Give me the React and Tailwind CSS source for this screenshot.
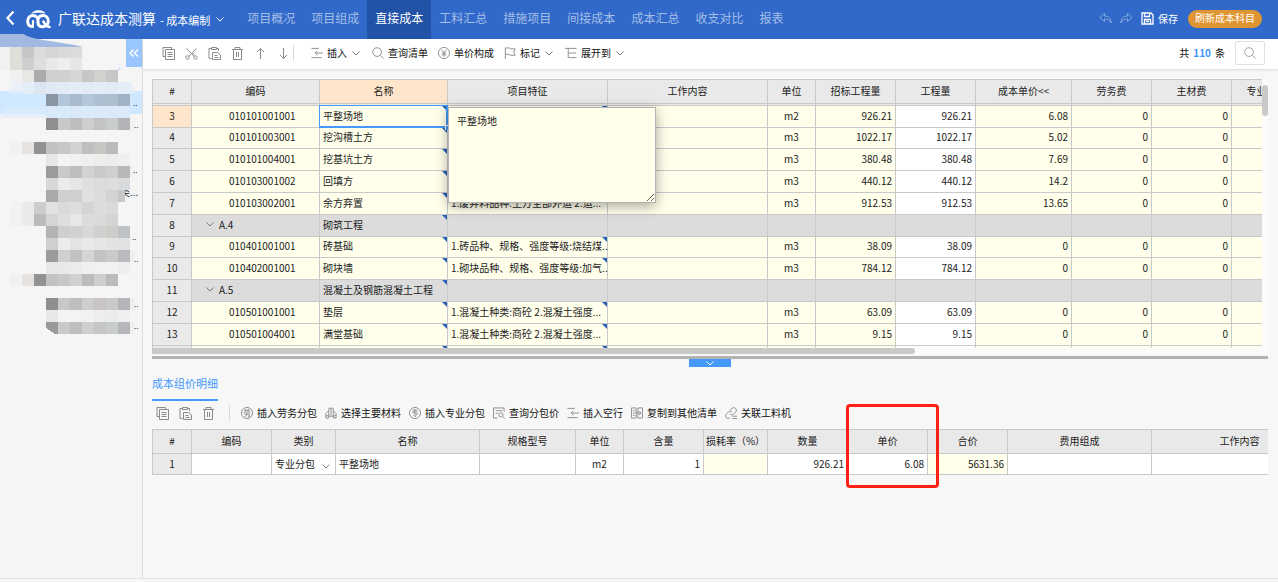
import { useState } from "react";

const navItems = ["项目概况", "项目组成", "直接成本", "工料汇总", "措施项目", "间接成本", "成本汇总", "收支对比", "报表"];

const costColumns = [
  { key: "no", label: "#", width: 40 },
  { key: "code", label: "编码", width: 128 },
  { key: "name", label: "名称", width: 128 },
  { key: "spec", label: "项目特征", width: 160 },
  { key: "work", label: "工作内容", width: 160 },
  { key: "unit", label: "单位", width: 48 },
  { key: "bidQty", label: "招标工程量", width: 80 },
  { key: "qty", label: "工程量", width: 80 },
  { key: "price", label: "成本单价<<", width: 96 },
  { key: "labor", label: "劳务费", width: 80 },
  { key: "material", label: "主材费", width: 80 },
  { key: "sub", label: "专业分包费", width: 80 },
];

const costRows = [
  { no: 3, code: "010101001001", name: "平整场地", spec: " ", unit: "m2", bidQty: "926.21", qty: "926.21", price: "6.08", labor: "0", material: "0" },
  { no: 4, code: "010101003001", name: "挖沟槽土方", spec: " ", unit: "m3", bidQty: "1022.17", qty: "1022.17", price: "5.02", labor: "0", material: "0" },
  { no: 5, code: "010101004001", name: "挖基坑土方", spec: " ", unit: "m3", bidQty: "380.48", qty: "380.48", price: "7.69", labor: "0", material: "0" },
  { no: 6, code: "010103001002", name: "回填方", spec: " ", unit: "m3", bidQty: "440.12", qty: "440.12", price: "14.2", labor: "0", material: "0" },
  { no: 7, code: "010103002001", name: "余方弃置", spec: "1.废弃料品种:土方全部外运 2.运...", unit: "m3", bidQty: "912.53", qty: "912.53", price: "13.65", labor: "0", material: "0" },
  { no: 8, code: "A.4", name: "砌筑工程", group: true },
  { no: 9, code: "010401001001", name: "砖基础", spec: "1.砖品种、规格、强度等级:烧结煤...", unit: "m3", bidQty: "38.09", qty: "38.09", price: "0", labor: "0", material: "0" },
  { no: 10, code: "010402001001", name: "砌块墙", spec: "1.砌块品种、规格、强度等级:加气...", unit: "m3", bidQty: "784.12", qty: "784.12", price: "0", labor: "0", material: "0" },
  { no: 11, code: "A.5", name: "混凝土及钢筋混凝土工程", group: true },
  { no: 12, code: "010501001001", name: "垫层", spec: "1.混凝土种类:商砼 2.混凝土强度...", unit: "m3", bidQty: "63.09", qty: "63.09", price: "0", labor: "0", material: "0" },
  { no: 13, code: "010501004001", name: "满堂基础", spec: "1.混凝土种类:商砼 2.混凝土强度...", unit: "m3", bidQty: "9.15", qty: "9.15", price: "0", labor: "0", material: "0" },
  { no: "", code: "", name: " ", spec: " " },
];

const detailColumns = [
  { label: "#", width: 40 },
  { label: "编码", width: 80 },
  { label: "类别", width: 64 },
  { label: "名称", width: 144 },
  { label: "规格型号", width: 96 },
  { label: "单位", width: 48 },
  { label: "含量", width: 80 },
  { label: "损耗率（%）", width: 64 },
  { label: "数量", width: 80 },
  { label: "单价", width: 80 },
  { label: "合价", width: 80 },
  { label: "费用组成", width: 144 },
  { label: "工作内容", width: 176 },
];

// 12px blocks, each row: y, first column index, colours
const blocks = [
  [46, 0, ["#f1f1f1", "#dfded9", "#c5c6c8", "#dcdcdb", "#d4d6d5", "#d9dad9", "#dadcdb"]],
  [58, 0, ["#f1f1f1", "#dfded9", "#cdced0", "#dededf", "#e8e8e8", "#eeeeee", "#e5e6e6"]],
  [70, 1, ["#f1f1f1", "#e9e7e4", "#a9abac", "#cfcfcf", "#cfd0cf", "#d6d7d5", "#c7c7c7", "#d3d1cc", "#c6c7c7"]],
  [82, 2, ["#e9eef7", "#d4dae4", "#dfe4ec", "#e2e8f1", "#e6ecf5", "#e2e7ef", "#e5eaf3", "#dfe5ee", "#e8eef8"]],
  [94, 4, ["#8895a2", "#b1c6d8", "#a9bacc", "#b2c8da", "#adbfd1", "#adbfce", "#a0b2c3"]],
  [106, 4, ["#d3e5f5", "#d5e8f8", "#d6e7f6", "#d6e8f7", "#d6e9f8", "#d7e9f8", "#d8e9f8"]],
  [118, 4, ["#908e8f", "#c6c9c8", "#bfbdc0", "#cecece", "#c4c2c4", "#c8cccb", "#b4b4b8", "#f1f1f1"]],
  [142, 1, ["#f1f1f1", "#e6e2df", "#919393", "#c0c3c2", "#c7c8c9", "#d2d2d3", "#bfbfbf", "#c8c6c3", "#babcbc"]],
  [154, 4, ["#e7e7e7", "#f2f4f3", "#f1f1f1", "#eef0ef", "#ededeb", "#ebedec", "#efefef"]],
  [166, 4, ["#9c9a9b", "#c8cac9", "#bfbdc0", "#d3d2d2", "#cbc8ca", "#cfcfcf", "#b7b7ba", "#f1f1f1"]],
  [178, 4, ["#dad7d9", "#ebebe9", "#e6e6e6", "#e0dfdf", "#dedcdb", "#dddddd", "#d8dadc"]],
  [190, 4, ["#a8aaa7", "#cfcfcf", "#d1cfd1", "#e0e0e1", "#dedcda", "#d1d3d4"]],
  [202, 1, ["#f2f2f2", "#eceae8", "#cacccd", "#e0e2e1", "#d9dad9", "#dcddde", "#d3d6d4", "#dcdcdb", "#d9dadb"]],
  [214, 1, ["#f1f1f1", "#eceae8", "#babbbc", "#d5d5d5", "#dededf", "#e7e7e7", "#dcdcda", "#dadad8", "#d3d4d4"]],
  [226, 4, ["#b4b2b3", "#cfcfcf", "#d2d0d2", "#d9d7d9", "#d0d0d0", "#cdcdca", "#bfc2c5"]],
  [238, 4, ["#cfcfcf", "#ebedec", "#e3e3e5", "#e9e9e9", "#e6e6e6", "#e2e3e3", "#e1e1e3"]],
  [250, 4, ["#9d9b9a", "#cfcfcf", "#c3c1c4", "#d5d3d5", "#c4c2c4", "#cacaca", "#b9babe", "#efefef"]],
  [262, 4, ["#e5e8e6", "#e9e9e9", "#ebebeb", "#f0f0f0", "#f1f1f0", "#f0f2f1", "#eeeeee"]],
  [274, 1, ["#f1f1f1", "#e6e2df", "#919393", "#c0c3c2", "#c6c8c9", "#d0d1d3", "#bcbdba", "#d0cdcd", "#babcbc"]],
  [298, 4, ["#908e8f", "#c6c9c8", "#bfbdc0", "#cecece", "#c8c4c6", "#c7cac9", "#b4b4b9", "#efefef"]],
  [310, 4, ["#e7e7e7", "#f2f4f3", "#f2f3f3", "#f0f1f0", "#ededeb", "#ebedec", "#efefef"]],
  [322, 4, ["#9a9898", "#c8cac9", "#bfbdc0", "#cfcfcf", "#c6c4c6", "#c8cccb", "#b6b7bb", "#efefef"]],
];

const moreMarks = [
  [133, 106], [134, 128], [133, 173], [132, 240], [134, 262], [134, 307], [134, 329],
];

function Icon({ children, className = "h-[13px] w-[13px]" }) {
  return (
    <svg viewBox="0 0 13 13" className={`shrink-0 ${className}`} fill="none" stroke="currentColor" aria-hidden="true">
      {children}
    </svg>
  );
}

const CopyIcon = () => (
  <Icon>
    <path d="M3 9.5H1V.5h8.500V2.500M3.500 2.500h9v10h-9zM5.500 5.500h5M5.500 7.500h5M5.500 9.500h5" />
  </Icon>
);

const CutIcon = () => (
  <Icon>
    <path d="M1.500 1.500 9.500 9.500M11.500 1.500 3.700 9.500M7.500 7h1.500" />
    <circle cx="2.500" cy="10.500" r="1.700" />
    <circle cx="10.500" cy="10.500" r="1.700" />
  </Icon>
);

const PasteIcon = () => (
  <Icon>
    <path d="M3.500 11.500H1v-10h2.500M8.500 1.500H10.500V4M3.500.500h5v2h-5zM4.500 5.500h5l3 2.500v4.500h-8zM6.500 8.500h3M6.500 10.500h4" />
  </Icon>
);

const TrashIcon = () => (
  <Icon>
    <path d="M1 2.500h11M4 2.500V.500h5v2M2.500 2.500v10h8v-10M5.500 5v5M7.500 5v5" />
  </Icon>
);

const UpIcon = () => (
  <Icon>
    <path d="M6.500 12V1.500M3 5l3.500-3.500L10 5" />
  </Icon>
);

const DownIcon = () => (
  <Icon>
    <path d="M6.500 1v10.500M3 8l3.500 3.500L10 8" />
  </Icon>
);

const InsertIcon = () => (
  <Icon className="h-3 w-3">
    <path d="M.500 1.500h8M5 6.500h8M.500 11.500h11M7 4 4.500 6.500 7 9" />
  </Icon>
);

const SearchIcon = () => (
  <Icon className="h-3 w-3">
    <circle cx="5.500" cy="5.500" r="4.700" />
    <path d="m9 9 3.500 3.500" />
  </Icon>
);

const YuanIcon = () => (
  <Icon className="h-3 w-3">
    <circle cx="6.500" cy="6.500" r="6" />
    <path d="M4 3l2.500 3L9 3M6.500 6v4.500M4 6.500h5M4 8.500h5" />
  </Icon>
);

const FlagIcon = () => (
  <Icon className="h-3 w-3">
    <path d="M1.500 13V1h4l1.500 1h5l-1.500 3.500L12 9H7L5.500 8h-4" />
  </Icon>
);

const ExpandIcon = () => (
  <Icon className="h-3 w-3">
    <path d="M0 1.500h12.500M3.500 1.500v10M3.500 6.500h8.500M3.500 11.500h9" />
  </Icon>
);

const LaborIcon = () => (
  <Icon className="h-3 w-3">
    <circle cx="6.500" cy="6.500" r="6" />
    <path d="M3.500 3.500h6M5 2.500v2M8 2.500v2M3.500 7V5.500h6V7M4 8h5v2.500H7.500M6.500 6.500C6.500 9 5.500 10 4 10.500" />
  </Icon>
);

const MaterialIcon = () => (
  <Icon className="h-3 w-3">
    <path d="M4 10V2.500C4 .500 6.500.500 6.500 2.500V9.500M6.500 2.500C6.500.500 9 .500 9 2.500V10M4 4 1 7v5h3v-2h5v2h3V7L9 4M1 9.500h3M9 9.500h3" />
  </Icon>
);

const MajorIcon = () => (
  <Icon className="h-3 w-3">
    <circle cx="6.500" cy="6.500" r="6" />
    <path d="M4 3.500h5M3.500 5.500h6M6.500 2.500 5.500 7.500H9L7 9.500M5 9l2.500 1.500" />
  </Icon>
);

const QueryPriceIcon = () => (
  <Icon className="h-3 w-3">
    <path d="M5 12H.500V1h11.500v4M3 4h7M3 7h2M10.500 10.500l2 2" />
    <circle cx="8.500" cy="8.500" r="2.300" />
  </Icon>
);

const CopyToIcon = () => (
  <Icon className="h-3 w-3">
    <path d="M.500 1h5v11h-5zM7.500 1h5v11h-5zM2 4h2M2 6.500h2M2 9h2M5.500 6.500H11M9 4.500l2 2-2 2" />
  </Icon>
);

const LinkIcon = () => (
  <Icon className="h-3 w-3">
    <path d="M5.500 3.500 7.500 1.500a2.600 2.600 0 0 1 4 4l-2 2a2.600 2.600 0 0 1-4 0M7.500 5.500a2.600 2.600 0 0 0-4 0L1.500 7.500a2.600 2.600 0 0 0 4 4M8 10h5M8 12.500h5" />
  </Icon>
);

function Chevron({ className = "" }) {
  return (
    <svg viewBox="0 0 8 5" className={`h-[5px] w-2 shrink-0 ${className}`} fill="none" stroke="currentColor" aria-hidden="true">
      <path d="M.5.5 4 4 7.500.5" />
    </svg>
  );
}

function ToolButton({ icon, children, menu }) {
  return (
    <button type="button" className="flex items-center gap-1 whitespace-nowrap">
      <span className="text-[#8a8a8a]">{icon}</span>
      <span className="text-[#111]">{children}</span>
      {menu && <Chevron className="ml-px mr-0.5 text-[#777]" />}
    </button>
  );
}

function IconButton({ label, children }) {
  return (
    <button type="button" aria-label={label} className="text-[#8a8a8a]">
      {children}
    </button>
  );
}

function Header() {
  const [active, setActive] = useState("直接成本");

  return (
    <header className="flex h-[39px] shrink-0 items-center bg-[#3069c9] text-white">
      <button type="button" aria-label="返回" className="pb-1 pl-1.5">
        <svg viewBox="0 0 9 16" className="h-4 w-[9px]" fill="none" stroke="currentColor" strokeWidth="2.200">
          <path d="M7.500 1.500 1.500 8l6 6.500" />
        </svg>
      </button>
      <svg viewBox="0 0 25 19" className="ml-[11px] h-[19px] w-[25px] shrink-0" fill="none" stroke="white" strokeLinecap="round" aria-hidden="true">
        <path d="M6 3.200C9.500-.600 15.500-.600 19 3.200c-4-1-9-1-13 0Z" fill="white" strokeWidth=".500" />
        <path d="M6.500 16.500C3.500 16.800 1.700 14.500 1.700 11.300c0-3.600 2.400-5.800 5.200-5.800 3 0 5.100 2 5.100 5.200v1.500c0 3 2 4.500 4.700 4.500 3.100 0 5.600-2.300 5.600-5.600s-2.300-5.600-5.200-5.600c-2.400 0-4.300 1.300-5 3.400" strokeWidth="3" />
        <path d="M7 11v3.500c0 1.400-.3 2-1 2" strokeWidth="2.200" />
        <path d="M17.500 11.500c1 2.500 3 4.800 6 5.500" strokeWidth="2.600" />
      </svg>
      <h1 className="ml-[7px] whitespace-nowrap pb-1 text-sm leading-5">广联达成本测算</h1>
      <button type="button" className="ml-1 flex items-center whitespace-nowrap text-[11px] leading-4">
        <span>- 成本编制</span>
        <Chevron className="ml-1.5" />
      </button>
      <nav className="ml-[15px] flex self-stretch">
        {navItems.map((item) => (
          <a
            key={item}
            href="#"
            onClick={() => setActive(item)}
            className={`flex items-center whitespace-nowrap px-2 pb-1 text-xs ${active === item ? "bg-[#2253a7] text-white" : "text-[#a6bfe8]"}`}
          >
            {item}
          </a>
        ))}
      </nav>
      <div className="ml-auto flex items-center pb-0.5 pr-4">
        <button type="button" aria-label="撤销" className="text-[#86a9e2]">
          <Icon>
            <path d="M5.500 1.500.800 5.500l4.700 4V7c3 0 5 1 6.700 4 0-4-2.200-7-6.700-7z" />
          </Icon>
        </button>
        <button type="button" aria-label="重做" className="ml-2 text-[#86a9e2]">
          <Icon>
            <path d="M7.500 1.500l4.700 4-4.700 4V7c-3 0-5 1-6.700 4 0-4 2.200-7 6.700-7z" />
          </Icon>
        </button>
        <button type="button" className="ml-2 flex items-center gap-1 text-[10px] leading-[14px]">
          <Icon>
            <path d="M1 1h9l2 2v9H1zM3.500 1v3.500h5V1M3.500 12V7.500h6V12M5 9.500h3" strokeWidth="1.300" />
          </Icon>
          <span>保存</span>
        </button>
        <button type="button" className="ml-2.5 h-[18px] whitespace-nowrap rounded-full bg-[#df9531] px-[7px] pb-0.5 text-[10px] leading-[14px]">
          刷新成本科目
        </button>
      </div>
    </header>
  );
}

function Sidebar() {
  return (
    <aside className="relative w-[143px] shrink-0 border-r border-[#dedede] bg-[#f5f5f5]">
      <svg viewBox="0 34 142 306" className="absolute -top-[5px] left-0 h-[306px] w-[142px]" shapeRendering="crispEdges">
        <rect x="0" y="91" width="142" height="23" fill="#cee8ff" />
        <text x="120" y="196" fontSize="10" fill="#222">类...</text>
        <rect x="118" y="190" width="7" height="12" fill="#c7c8ca" />
        {blocks.map(([y, start, colors]) =>
          colors.map((color, i) => {
            const x = (start + i) * 12 - 2;
            const width = start + i === 11 ? 5 : 12;
            return <rect key={`${x}-${y}`} x={x} y={y} width={width} height="12" fill={color} />;
          })
        )}
        <path d="M15 82h117l3 12H7z" fill="#e3edfa" opacity=".6" />
        <path d="M3 106h127l-2 12H1z" fill="#dcebf9" opacity=".6" />
        <path d="M46 322v6l9 6h-9z" fill="#f5f5f5" />
        <path d="M0 34h23c10 6 30 7 52 11l7 2H0z" fill="#a3b9e1" shapeRendering="auto" />
        <path d="M118 67l4 3h-4z" fill="#cfe1fa" shapeRendering="auto" />
        {moreMarks.map(([x, y]) => (
          <text key={y} x={x} y={y} fontSize="8" fill="#222">..</text>
        ))}
      </svg>
      <button type="button" aria-label="收起" className="absolute right-0 top-0 flex h-7 w-4 items-center justify-center bg-[#99c6ff] text-white">
        <svg viewBox="0 0 10 8" className="h-2 w-2.5" fill="none" stroke="currentColor" strokeWidth="1.500">
          <path d="M4.500.500 1 4l3.500 3.500M9 .500 5.500 4 9 7.500" />
        </svg>
      </button>
    </aside>
  );
}

function Toolbar() {
  return (
    <div className="z-10 flex h-[30px] shrink-0 items-center bg-white pb-0.5 pl-[19px] pr-[13px] shadow-[0_1px_2px_rgba(0,0,0,0.12)]">
      <div className="flex items-center gap-2.5">
        <IconButton label="复制"><CopyIcon /></IconButton>
        <IconButton label="剪切"><CutIcon /></IconButton>
        <IconButton label="粘贴"><PasteIcon /></IconButton>
        <IconButton label="删除"><TrashIcon /></IconButton>
        <IconButton label="上移"><UpIcon /></IconButton>
        <IconButton label="下移"><DownIcon /></IconButton>
      </div>
      <div className="ml-[3px] h-4 w-px bg-[#d9d9e2]" />
      <div className="ml-[17px] flex items-center gap-2.5">
        <ToolButton icon={<InsertIcon />} menu>插入</ToolButton>
        <ToolButton icon={<SearchIcon />}>查询清单</ToolButton>
        <ToolButton icon={<YuanIcon />}>单价构成</ToolButton>
        <ToolButton icon={<FlagIcon />} menu>标记</ToolButton>
        <ToolButton icon={<ExpandIcon />} menu>展开到</ToolButton>
      </div>
      <p className="ml-auto flex gap-1 whitespace-nowrap text-[#111]">
        共 <b className="text-[#3c94ff]">110</b> 条
      </p>
      <button type="button" aria-label="搜索" className="ml-2.5 flex h-6 w-[30px] items-center justify-center rounded-xs border border-[#e2e2e2] text-[#999]">
        <SearchIcon />
      </button>
    </div>
  );
}

function Columns({ columns }) {
  return (
    <colgroup>
      {columns.map((col) => (
        <col key={col.label} style={{ width: col.width }} />
      ))}
    </colgroup>
  );
}

function Corner() {
  return (
    <svg viewBox="0 0 5 5" className="absolute right-0 top-0 h-[5px] w-[5px]" aria-hidden="true">
      <path d="M0 0h5v5z" fill="#2a62b8" />
    </svg>
  );
}

function cellStyle(key, row) {
  if (key === "no") return row.no === 3 ? "bg-[#ffe6ca] text-center border-l" : "bg-[#e9e9e9] text-center border-l";
  const bg = row.group ? "bg-[#dcdcdc]" : key === "qty" ? "bg-white" : "bg-[#ffffeb]";
  if (key === "code") return `${bg} ${row.group ? "pl-3.5" : "pl-[37px]"}`;
  if (key === "unit") return `${bg} text-center`;
  if (key === "name" || key === "spec" || key === "work") return `${bg} px-[3px]`;
  return `${bg} px-[3px] text-right`;
}

function CostTable() {
  return (
    <table className="w-[1160px] table-fixed border-separate border-spacing-0">
      <Columns columns={costColumns} />
      <thead>
        <tr className="h-[25px]">
          {costColumns.map((col) => (
            <th
              key={col.key}
              className={`border-y border-r border-[#c9c9c9] px-0 pt-0 pb-0.5 font-normal first:border-l ${col.key === "name" ? "bg-[#ffe6ca]" : "bg-[#e9e9e9]"}`}
            >
              {col.label}
            </th>
          ))}
        </tr>
      </thead>
      <tbody>
        <tr className="h-0.5">
          {costColumns.map((col) => (
            <td key={col.key} className="h-0.5 border-b border-r border-[#c9c9c9] bg-[#e9e9e9] p-0 first:border-l" />
          ))}
        </tr>
        {costRows.map((row, i) => (
          <tr key={i} className={i % 5 === 1 ? "h-[21px]" : "h-[22px]"}>
            {costColumns.map(({ key }) => (
              <td key={key} className={`relative whitespace-nowrap border-b border-r border-[#c9c9c9] pt-0 pb-0.5 ${cellStyle(key, row)}`}>
                {key === "code" && row.group ? (
                  <span className="flex items-center gap-[5px]">
                    <Chevron className="text-[#777]" />
                    {row.code}
                  </span>
                ) : (
                  row[key]
                )}
                {(key === "name" || key === "spec") && row[key] && <Corner />}
                {key === "name" && row.no === 3 && (
                  <span className="absolute -inset-px z-10 border border-b-2 border-r-2 border-[#4499fb]">
                    <span className="absolute -bottom-1 -right-1 h-[5px] w-[5px] border-l border-t border-white bg-[#4499fb]" />
                  </span>
                )}
              </td>
            ))}
          </tr>
        ))}
      </tbody>
    </table>
  );
}

function CostPanel() {
  const [note, setNote] = useState("平整场地");

  return (
    <section className="flex min-h-0 flex-1 flex-col pl-[9px] pr-2.5 pt-2.5">
      <div className="relative flex min-h-0 flex-1">
        <div className="min-w-0 flex-1 overflow-hidden">
          <CostTable />
        </div>
        <div className="w-1.5 shrink-0 bg-[#fbfbfb] pt-1.5">
          <div className="h-[31px] rounded-full bg-[#c9c9c9]" />
        </div>
        <textarea
          aria-label="名称"
          value={note}
          onChange={(e) => setNote(e.target.value)}
          className="absolute left-[296px] top-7 z-20 h-24 w-52 resize border border-[#b4b4b4] bg-[#ffffeb] px-2 py-1.5 shadow-[0_3px_12px_rgba(0,0,0,0.35)] outline-none"
        />
      </div>
      <div className="h-1.5 shrink-0 bg-[#fbfbfb]">
        <div className="h-1.5 w-[763px] rounded-r-full bg-[#c9c9c9]" />
      </div>
      <div className="mt-0.5 h-[3px] shrink-0 bg-[#b3b3b3]" />
    </section>
  );
}

function DetailPanel() {
  return (
    <section className="h-[219px] shrink-0 pl-[9px] pr-2.5">
      <button type="button" aria-label="折叠" className="mx-auto flex h-2 w-[42px] items-center justify-center bg-[#4499fb] text-white">
        <Chevron />
      </button>
      <div className="mt-2 flex">
        <h2 className="border-b-2 border-[#4499fb] pb-2 text-[11px] leading-4 text-[#4499fb]">成本组价明细</h2>
      </div>
      <div className="flex h-7 items-center pb-1 pl-1">
        <div className="flex items-center gap-2.5">
          <IconButton label="复制"><CopyIcon /></IconButton>
          <IconButton label="粘贴"><PasteIcon /></IconButton>
          <IconButton label="删除"><TrashIcon /></IconButton>
        </div>
        <div className="ml-3.5 h-4 w-px bg-[#d9d9e2]" />
        <div className="ml-[11px] flex items-center gap-2">
          <ToolButton icon={<LaborIcon />}>插入劳务分包</ToolButton>
          <ToolButton icon={<MaterialIcon />}>选择主要材料</ToolButton>
          <ToolButton icon={<MajorIcon />}>插入专业分包</ToolButton>
          <ToolButton icon={<QueryPriceIcon />}>查询分包价</ToolButton>
          <ToolButton icon={<InsertIcon />}>插入空行</ToolButton>
          <ToolButton icon={<CopyToIcon />}>复制到其他清单</ToolButton>
          <ToolButton icon={<LinkIcon />}>关联工料机</ToolButton>
        </div>
      </div>
      <div className="relative">
        <div className="overflow-hidden">
          <table className="w-[1176px] table-fixed border-separate border-spacing-0">
            <Columns columns={detailColumns} />
            <thead>
              <tr className="h-[25px]">
                {detailColumns.map((col) => (
                  <th key={col.label} className="whitespace-nowrap border-y border-r border-[#c9c9c9] bg-[#e9e9e9] px-0 pt-0 pb-0.5 font-normal first:border-l">
                    {col.label}
                  </th>
                ))}
              </tr>
            </thead>
            <tbody className="[&_td]:border-b [&_td]:border-r [&_td]:border-[#c9c9c9] [&_td]:px-[3px] [&_td]:py-0">
              <tr className="h-[21px] bg-white">
                <td className="border-l bg-[#e9e9e9] text-center">1</td>
                <td />
                <td>
                  <div className="relative flex items-center">
                    <select aria-label="类别" className="w-full appearance-none bg-transparent leading-[14px]">
                      <option>专业分包</option>
                    </select>
                    <Chevron className="pointer-events-none absolute right-0.5 top-[7px] text-[#888]" />
                  </div>
                </td>
                <td>平整场地</td>
                <td />
                <td className="text-center">m2</td>
                <td className="text-right">1</td>
                <td className="bg-[#ffffeb]" />
                <td className="text-right">926.21</td>
                <td className="text-right">6.08</td>
                <td className="bg-[#ffffeb] text-right">5631.36</td>
                <td />
                <td />
              </tr>
            </tbody>
          </table>
        </div>
        <div className="pointer-events-none absolute -top-[25px] left-[694px] h-[84px] w-[93px] rounded-sm border-3 border-[#ff2114]" />
      </div>
    </section>
  );
}

export default function App() {
  return (
    <div className="flex h-screen flex-col overflow-hidden bg-[#f7f7f7] font-['Noto_Sans_CJK_SC',sans-serif] text-[10px] leading-[14px] text-[#222]">
      <Header />
      <div className="flex min-h-0 flex-1">
        <Sidebar />
        <main className="flex min-w-0 flex-1 flex-col">
          <Toolbar />
          <CostPanel />
          <DetailPanel />
        </main>
      </div>
      <div className="h-1 shrink-0 border-t border-[#e2e2e2]" />
    </div>
  );
}
